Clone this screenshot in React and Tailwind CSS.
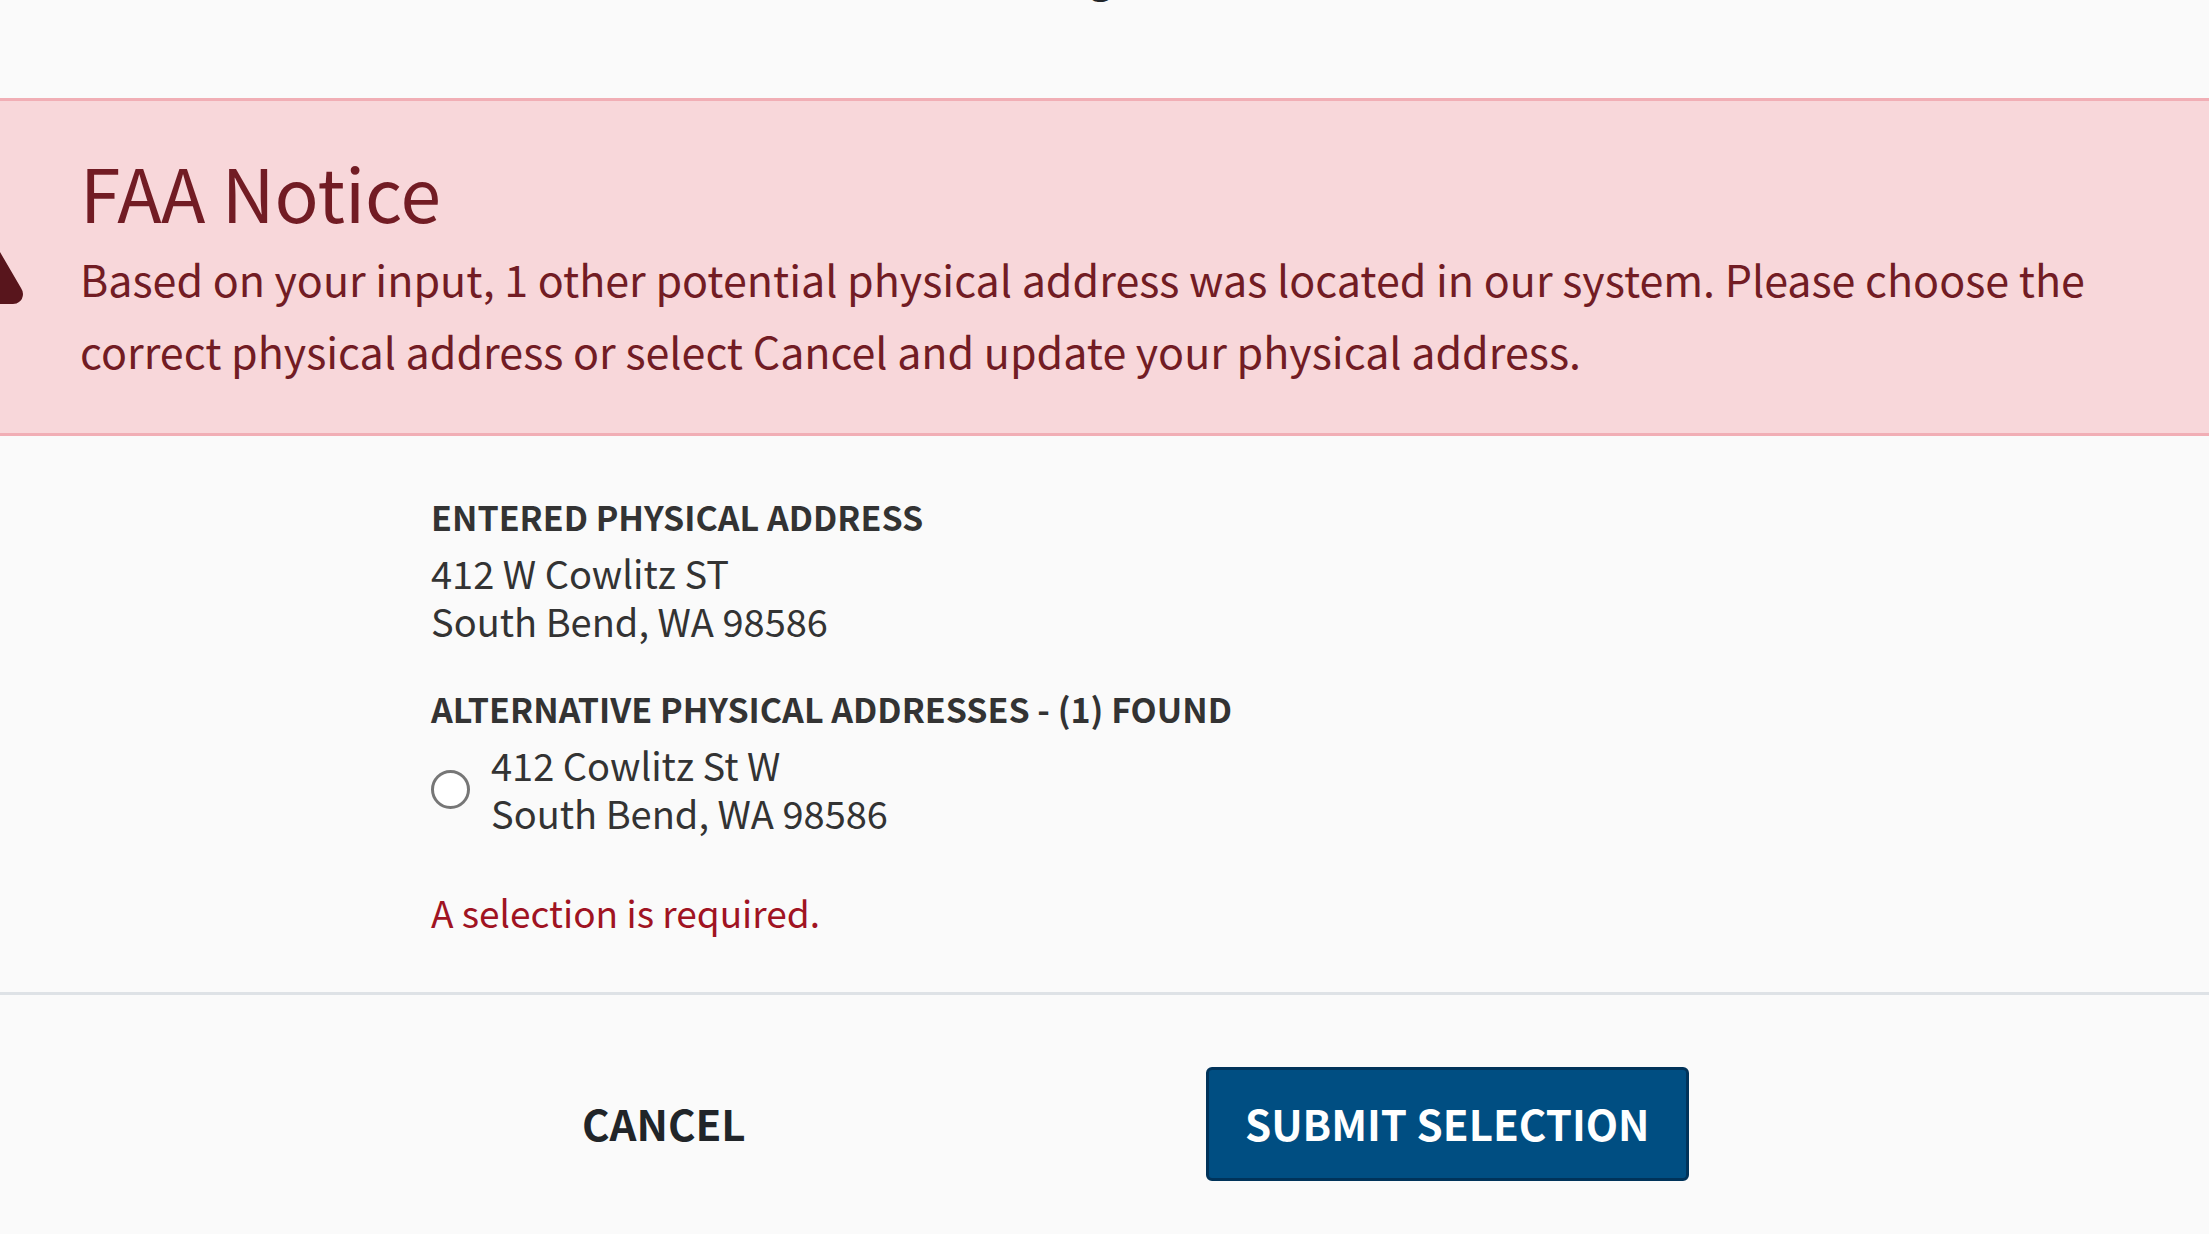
import React, { useState } from 'react';

const entered = ['412 W Cowlitz ST', 'South Bend, WA 98586'];

const alternatives = [
  { id: 'alt-1', lines: ['412 Cowlitz St W', 'South Bend, WA 98586'] },
];

function Notice() {
  return (
    <section role="alert" className="flex items-center border-y-3 border-[#f1aeb5] bg-[#f8d7da] pt-11 pb-[47px]">
      {/* Warning triangle, bleeds off the left edge */}
      <svg viewBox="0 0 24 76" className="w-6 h-[76px] shrink-0" aria-hidden="true">
        <path d="M0 24L21 60Q23 63 23 66Q23 71 19 74Q17 76 13 76H0Z" fill="#58151c" />
      </svg>
      <div className="flex-1 pl-14 pr-20 text-[#721c24]">
        <h2 className="mb-[5px] text-[73px] leading-[92px]">FAA Notice</h2>
        <p className="text-[43px] leading-[72px]">
          Based on your input, 1 other potential physical address was located in our system. Please choose the
          correct physical address or select Cancel and update your physical address.
        </p>
      </div>
    </section>
  );
}

function App() {
  const [selected, setSelected] = useState('');

  return (
    <main className="min-h-screen bg-[#fafafa] font-['Noto_Sans_CJK_SC','Noto_Sans',sans-serif] text-[#333]">
      <header className="flex h-[98px] justify-center overflow-hidden">
        <h1 className="-mt-16 pr-2 text-[43px] leading-[72px] text-[#212529]">g</h1>
      </header>

      <Notice />

      <form onSubmit={e => e.preventDefault()}>
        <div className="pl-[431px] pt-[57px] pb-14 text-[38px] leading-12">
          <h3 className="text-[34px] font-bold uppercase">Entered Physical Address</h3>
          <address className="mt-2 not-italic">
            {entered.map(line => <div key={line}>{line}</div>)}
          </address>

          <fieldset className="mt-10">
            <legend className="text-[34px] font-bold uppercase">Alternative Physical Addresses - (1) Found</legend>
            {alternatives.map(alt => (
              <div key={alt.id} className="mt-2 flex items-center gap-[21px]">
                <input
                  type="radio"
                  id={alt.id}
                  name="address"
                  checked={selected === alt.id}
                  onChange={() => setSelected(alt.id)}
                  className="size-[39px] appearance-none rounded-full border-3 border-[#767676] bg-white checked:border-[12px] checked:border-[#004e82]"
                />
                <label htmlFor={alt.id}>
                  {alt.lines.map(line => <span key={line} className="block">{line}</span>)}
                </label>
              </div>
            ))}
          </fieldset>

          {!selected && <p className="mt-[51px] text-[37px] text-[#a01322]">A selection is required.</p>}
        </div>

        <div className="grid grid-cols-2 border-t-3 border-[#dee2e6] pl-[272px] pr-[370px] pt-[72px] pb-12 text-[42px] font-semibold">
          <div className="flex justify-center">
            <button type="button" className="h-[114px] px-9 pb-1 uppercase text-[#212529]">Cancel</button>
          </div>
          <div className="flex justify-center">
            <button type="submit" className="h-[114px] rounded-md border-3 border-[#00335a] bg-[#004e82] px-9 pb-1 uppercase text-white">
              Submit Selection
            </button>
          </div>
        </div>
      </form>
    </main>
  );
}

export default App;
